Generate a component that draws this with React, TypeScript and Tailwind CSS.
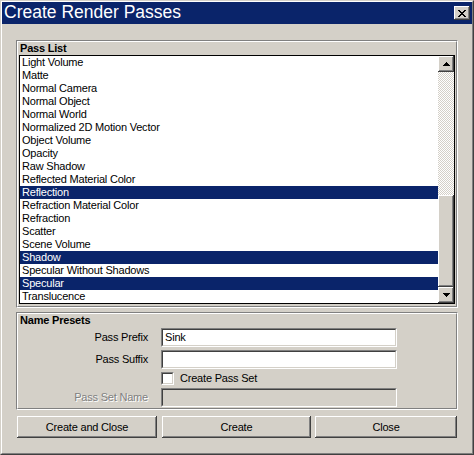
import React from "react";

const passes = [
  "Light Volume",
  "Matte",
  "Normal Camera",
  "Normal Object",
  "Normal World",
  "Normalized 2D Motion Vector",
  "Object Volume",
  "Opacity",
  "Raw Shadow",
  "Reflected Material Color",
  "Reflection",
  "Refraction Material Color",
  "Refraction",
  "Scatter",
  "Scene Volume",
  "Shadow",
  "Specular Without Shadows",
  "Specular",
  "Translucence",
];

const selected = new Set(["Reflection", "Shadow", "Specular"]);

const raised =
  "bg-[#d4d0c8] shadow-[inset_-1px_-1px_0_#404040,inset_1px_1px_0_#ffffff,inset_-2px_-2px_0_#808080,inset_2px_2px_0_#d4d0c8]";
const sunken =
  "border border-t-[#808080] border-l-[#808080] border-r-white border-b-white";

function Arrow({ up }: { up: boolean }) {
  return (
    <svg width="7" height="4" viewBox="0 0 7 4" shapeRendering="crispEdges">
      {up ? (
        <path d="M3 0h1v1h-1zM2 1h3v1h-3zM1 2h5v1h-5zM0 3h7v1h-7z" fill="#000" />
      ) : (
        <path d="M0 0h7v1h-7zM1 1h5v1h-5zM2 2h3v1h-3zM3 3h1v1h-1z" fill="#000" />
      )}
    </svg>
  );
}

function GroupBox({ title, className, children }: { title: string; className?: string; children: React.ReactNode }) {
  return (
    <div className={`border border-t-[#808080] border-l-[#808080] border-r-white border-b-white ${className ?? ""}`}>
      <div className="h-full border border-t-white border-l-white border-r-[#808080] border-b-[#808080] flex flex-col">
        <div className="h-[13px] leading-[13px] pl-[2px] font-bold text-[11px] text-black">{title}</div>
        {children}
      </div>
    </div>
  );
}

function Field({ label, value, disabled }: { label: string; value?: string; disabled?: boolean }) {
  return (
    <div className="flex items-center h-[19px]">
      <div
        className={`w-[131px] text-right pr-[1px] ${disabled ? "text-[#808080] [text-shadow:1px_1px_0_#fff]" : "text-black"}`}
      >
        {label}
      </div>
      <div className={`ml-[12px] w-[236px] h-[19px] ${sunken}`}>
        <div
          className={`h-full border border-t-[#404040] border-l-[#404040] border-r-[#d4d0c8] border-b-[#d4d0c8] pl-[2px] leading-[15px] ${disabled ? "bg-[#d4d0c8]" : "bg-white"}`}
        >
          {value}
        </div>
      </div>
    </div>
  );
}

export default function App() {
  return (
    <div className="w-[474px] h-[455px] font-['Liberation_Sans',Arial,sans-serif] text-[11px] tracking-[-0.2px] text-black select-none">
      <div className="h-full border border-t-[#d4d0c8] border-l-[#d4d0c8] border-r-[#404040] border-b-[#404040] bg-[#d4d0c8]">
        <div className="h-full border border-t-white border-l-white border-r-[#808080] border-b-[#808080] flex flex-col">
          {/* title bar */}
          <div className="h-[22px] bg-[#0a246a] flex items-center justify-between pl-[2px] pr-[2px]">
            <span className="text-white text-[17.5px] tracking-normal leading-none">Create Render Passes</span>
            <div className={`w-[16px] h-[14px] flex items-center justify-center ${raised}`}>
              <svg width="8" height="7" viewBox="0 0 8 7" shapeRendering="crispEdges">
                <path
                  d="M0 0h2v1h-2zM6 0h2v1h-2zM1 1h2v1h-2zM5 1h2v1h-2zM2 2h4v1h-4zM3 3h2v1h-2zM2 4h4v1h-4zM1 5h2v1h-2zM5 5h2v1h-2zM0 6h2v1h-2zM6 6h2v1h-2z"
                  fill="#000"
                />
              </svg>
            </div>
          </div>

          <div className="flex-1 px-[14px] pt-[16px] flex flex-col">
            {/* Pass List */}
            <GroupBox title="Pass List" className="h-[268px]">
              <div className="mx-[1px] h-[249px] border border-black bg-white flex">
                <div className="flex-1 flex flex-col">
                  {passes.map((p) => (
                    <div
                      key={p}
                      className={`h-[13px] leading-[13px] pl-[2px] whitespace-nowrap ${selected.has(p) ? "bg-[#0a246a] text-white" : ""}`}
                    >
                      {p}
                    </div>
                  ))}
                </div>
                <div className="w-[16px] flex flex-col">
                  <div className={`h-[16px] flex items-center justify-center ${raised}`}>
                    <Arrow up />
                  </div>
                  <div className="h-[123px] bg-[repeating-conic-gradient(#ffffff_0_25%,#d4d0c8_0_50%)] bg-[length:2px_2px]" />
                  <div className={`h-[92px] ${raised}`} />
                  <div className={`h-[16px] flex items-center justify-center ${raised}`}>
                    <Arrow up={false} />
                  </div>
                </div>
              </div>
            </GroupBox>

            {/* Name Presets */}
            <GroupBox title="Name Presets" className="mt-[4px] h-[98px]">
              <div className="mt-[1px] flex flex-col gap-[3px]">
                <Field label="Pass Prefix" value="Sink" />
                <Field label="Pass Suffix" />
              </div>
              <div className="h-[19px] flex items-center pl-[143px]">
                <div className={`w-[13px] h-[13px] ${sunken}`}>
                  <div className="h-full border border-t-[#404040] border-l-[#404040] border-r-[#d4d0c8] border-b-[#d4d0c8] bg-white" />
                </div>
                <span className="ml-[6px]">Create Pass Set</span>
              </div>
              <Field label="Pass Set Name" disabled />
            </GroupBox>

            {/* buttons */}
            <div className="mt-[6px] flex">
              <button className={`ml-[1px] w-[140px] h-[22px] ${raised}`}>Create and Close</button>
              <button className={`ml-[5px] w-[149px] h-[22px] ${raised}`}>Create</button>
              <button className={`ml-[4px] w-[142px] h-[22px] ${raised}`}>Close</button>
            </div>
          </div>
        </div>
      </div>
    </div>
  );
}
